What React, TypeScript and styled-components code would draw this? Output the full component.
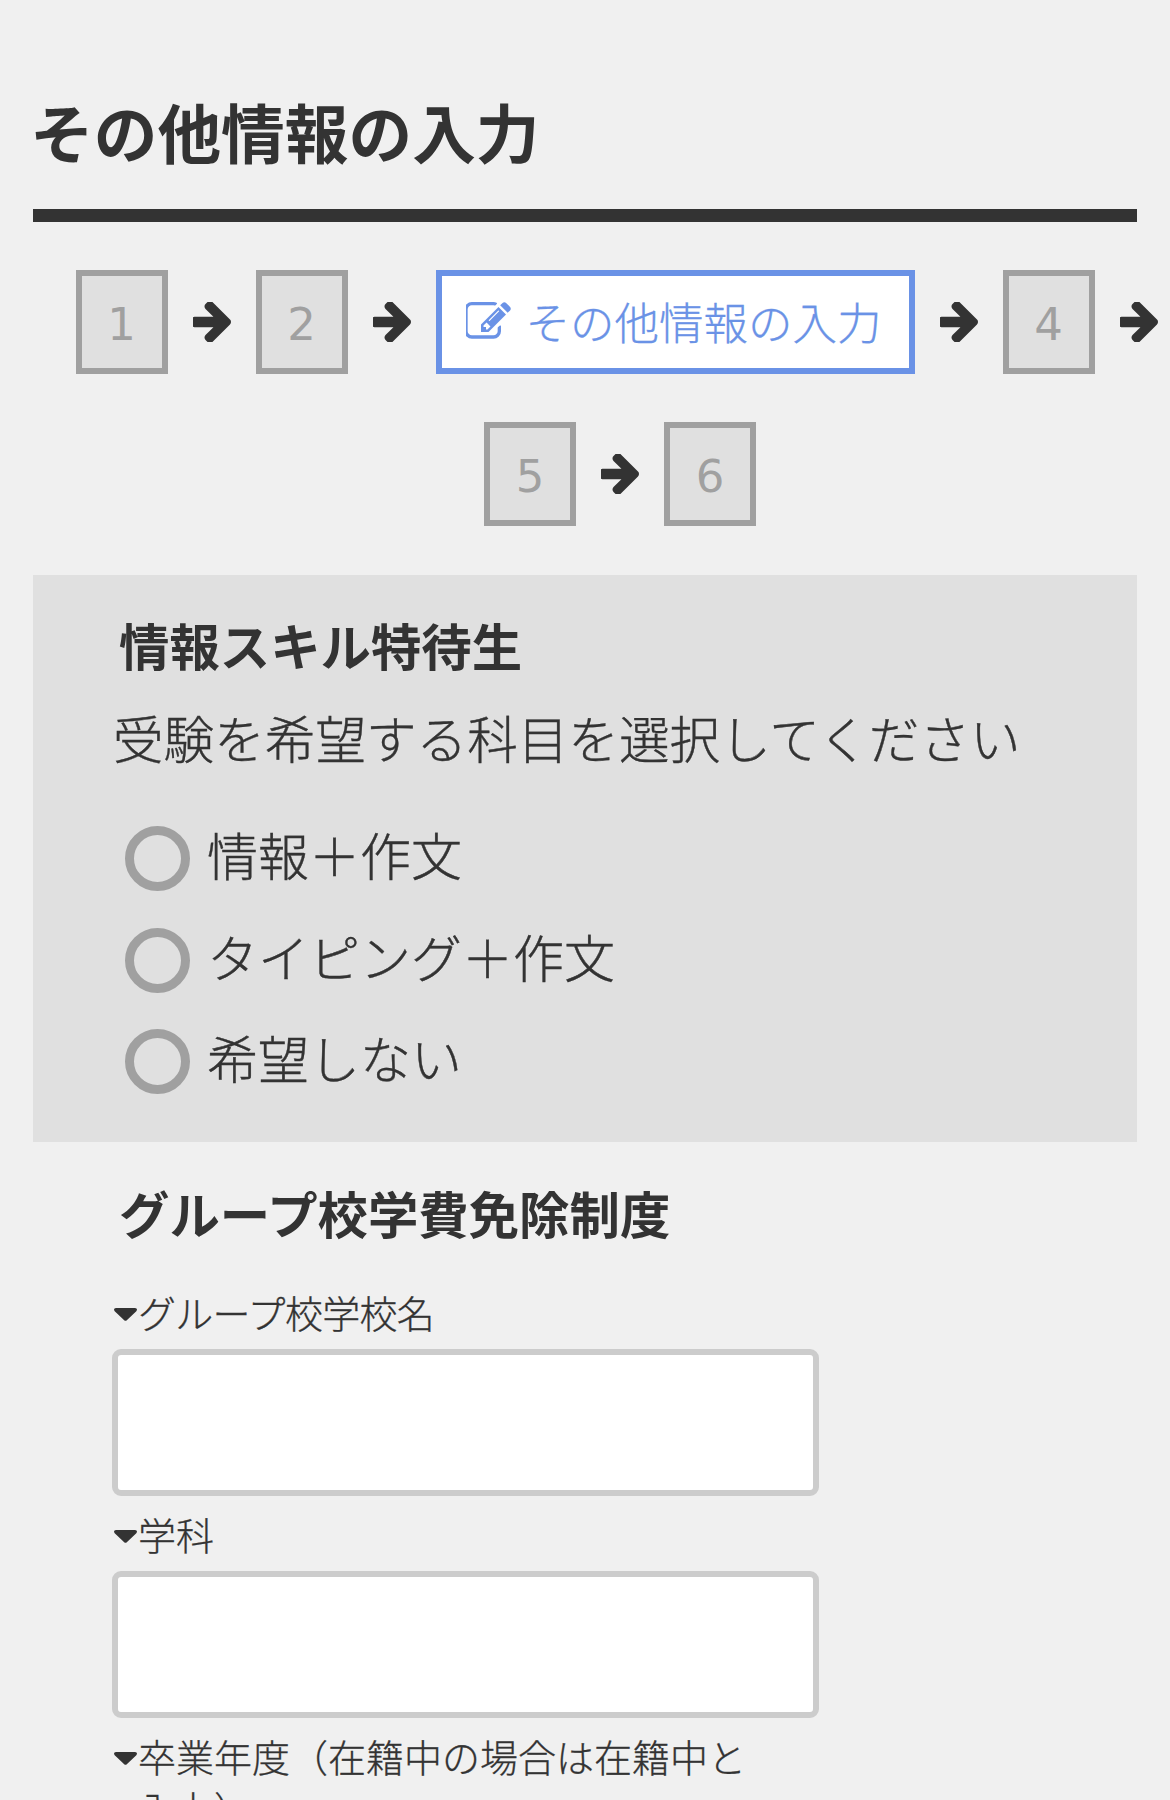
import { Fragment } from "react";
import styled, { createGlobalStyle } from "styled-components";

const GlobalStyle = createGlobalStyle`
  html, body {
    margin: 0;
    padding: 0;
    background: #f0f0f0;
  }

  body {
    font-family: "DejaVu Sans", "Noto Sans CJK JP", sans-serif;
    color: #333;
  }
`;

const Page = styled.div`
  height: 1800px;
  overflow: hidden;
  padding: 0 33px;
  box-sizing: border-box;
`;

const Title = styled.h1`
  margin: 0 0 0 -3px;
  padding: 88px 0 0;
  height: 209px;
  box-sizing: border-box;
  font-family: "Noto Sans CJK JP", sans-serif;
  font-size: 63.7px;
  line-height: 85px;
  font-weight: 700;
  color: #333;
`;

const Rule = styled.hr`
  margin: 0;
  border: 0;
  height: 13px;
  background: #333;
`;

const Steps = styled.div`
  display: flex;
  flex-direction: column;
  gap: 48px;
  margin: 48px -33px 49px;
`;

const StepRow = styled.div<{ $inset: number }>`
  display: flex;
  justify-content: center;
  align-items: center;
  gap: 25px;
  padding-left: ${(p) => p.$inset}px;
`;

const Step = styled.div`
  width: 92px;
  height: 104px;
  box-sizing: border-box;
  padding-top: 4px;
  border: 6px solid #a0a0a0;
  background: #e0e0e0;
  color: #a0a0a0;
  font-size: 45px;
  display: flex;
  align-items: center;
  justify-content: center;
`;

const ActiveStep = styled.div`
  width: 479px;
  height: 104px;
  box-sizing: border-box;
  padding: 0 0 4px 24px;
  border: 6px solid #6a92e6;
  background: #fff;
  color: #6a92e6;
  font-family: "Noto Sans CJK JP", sans-serif;
  font-size: 44.5px;
  font-weight: 300;
  -webkit-text-stroke: 0.3px currentColor;
  display: flex;
  align-items: center;
  gap: 15px;
`;

const ArrowSvg = styled.svg`
  width: 38px;
  height: 40px;
  flex: none;
  fill: #333;
`;

const EditSvg = styled.svg`
  width: 45px;
  height: 40px;
  margin-top: 4px;
  flex: none;
  fill: currentColor;
`;

const Section = styled.section<{ $shaded?: boolean }>`
  background: ${(p) => (p.$shaded ? "#e0e0e0" : "transparent")};
  padding: ${(p) => (p.$shaded ? "34px 80px 48px" : "35px 80px 0")};
  font-family: "Noto Sans CJK JP", sans-serif;
`;

const SectionTitle = styled.h2`
  margin: 0 0 0 6px;
  font-size: 50.4px;
  line-height: 72px;
  font-weight: 700;
  color: #333;
`;

const Lead = styled.p`
  margin: 20px 0 0;
  font-size: 50.6px;
  line-height: 72px;
  font-weight: 300;
  -webkit-text-stroke: 0.4px currentColor;
  color: #333;
`;

const RadioList = styled.div`
  display: flex;
  flex-direction: column;
  gap: 36.5px;
  margin: 53px 0 0 12px;
`;

const RadioRow = styled.label`
  display: flex;
  align-items: center;
  gap: 17px;
  height: 65px;
  font-size: 51px;
  font-weight: 300;
  -webkit-text-stroke: 0.4px currentColor;
`;

const RadioRing = styled.span`
  width: 65px;
  height: 65px;
  box-sizing: border-box;
  border: 9px solid #a0a0a0;
  border-radius: 50%;
  flex: none;
`;

const RadioText = styled.span`
  padding-bottom: 9px;
`;

const FieldLabel = styled.div<{ $tight?: boolean }>`
  display: flex;
  align-items: flex-start;
  font-size: 38px;
  font-weight: 300;
  -webkit-text-stroke: 0.3px currentColor;
  letter-spacing: ${(p) => (p.$tight ? "-0.7px" : "0")};
  line-height: 52px;
  max-width: 650px;
  color: #333;
`;

const CaretSvg = styled.svg`
  width: 23px;
  height: 13px;
  margin: 22px 1px 0 1px;
  flex: none;
  fill: #333;
`;

const FieldBlock = styled.div`
  margin-top: 37px;
`;

const TextField = styled.div`
  width: 707px;
  height: 147px;
  box-sizing: border-box;
  margin: 11px 0 0 -1px;
  border: 6px solid #ccc;
  border-radius: 9px;
  background: #fff;
`;

const NextField = styled.div`
  margin-top: 12px;
`;

function Arrow() {
  return (
    <ArrowSvg viewBox="192 218 1408 1484" preserveAspectRatio="none">
      <path d="M1600 960q0 54-37 91l-651 651q-39 37-91 37-51 0-90-37l-75-75q-38-38-38-91t38-91l293-293h-704q-52 0-84.5-37.5t-32.5-90.5v-128q0-53 32.5-90.5t84.5-37.5h704l-293-294q-38-36-38-90t38-90l75-75q38-38 90-38 53 0 91 38l651 651q37 35 37 90z" />
    </ArrowSvg>
  );
}

function EditIcon() {
  return (
    <EditSvg viewBox="128 128 1600 1536">
      <path d="M888 1184l116-116-152-152-116 116v56h96v96h56zm440-720q-16-16-33 1l-350 350q-17 17-1 33t33-1l350-350q17-17 1-33zm80 594v190q0 119-84.5 203.5t-203.5 84.5h-832q-119 0-203.5-84.5t-84.5-203.5v-832q0-119 84.5-203.5t203.5-84.5h832q63 0 117 25 15 7 18 23 3 17-9 29l-49 49q-14 14-32 8-23-6-45-6h-832q-66 0-113 47t-47 113v832q0 66 47 113t113 47h832q66 0 113-47t47-113v-126q0-13 9-22l64-64q15-15 35-7t20 29zm-96-738l288 288-672 672h-288v-288zm444 132l-92 92-288-288 92-92q27-27 68-27t68 27l152 152q27 27 27 68t-27 68z" />
    </EditSvg>
  );
}

function Caret() {
  return (
    <CaretSvg viewBox="0 0 23 13">
      <path d="M2 0h19q2 0 2 1.600q0 .9-.7 1.600l-9.500 9q-1.300 1-2.600 0l-9.500-9q-.7-.7-.7-1.600q0-1.600 2-1.600z" />
    </CaretSvg>
  );
}

const radios = ["情報＋作文", "タイピング＋作文", "希望しない"];

function App() {
  return (
    <Page>
      <GlobalStyle />
      <Title>その他情報の入力</Title>
      <Rule />
      <Steps>
        <StepRow $inset={63}>
          {[1, 2].map((n) => (
            <Fragment key={n}>
              <Step>{n}</Step>
              <Arrow />
            </Fragment>
          ))}
          <ActiveStep>
            <EditIcon />
            その他情報の入力
          </ActiveStep>
          <Arrow />
          <Step>4</Step>
          <Arrow />
        </StepRow>
        <StepRow $inset={70}>
          <Step>5</Step>
          <Arrow />
          <Step>6</Step>
        </StepRow>
      </Steps>

      <Section $shaded>
        <SectionTitle>情報スキル特待生</SectionTitle>
        <Lead>受験を希望する科目を選択してください</Lead>
        <RadioList>
          {radios.map((r) => (
            <RadioRow key={r}>
              <RadioRing />
              <RadioText>{r}</RadioText>
            </RadioRow>
          ))}
        </RadioList>
      </Section>

      <Section>
        <SectionTitle>グループ校学費免除制度</SectionTitle>
        <FieldBlock>
          <FieldLabel $tight>
            <Caret />
            <span>グループ校学校名</span>
          </FieldLabel>
          <TextField />
        </FieldBlock>
        <NextField>
          <FieldLabel>
            <Caret />
            <span>学科</span>
          </FieldLabel>
          <TextField />
        </NextField>
        <NextField>
          <FieldLabel>
            <Caret />
            <span>卒業年度（在籍中の場合は在籍中と入力）</span>
          </FieldLabel>
        </NextField>
      </Section>
    </Page>
  );
}

export default App;
